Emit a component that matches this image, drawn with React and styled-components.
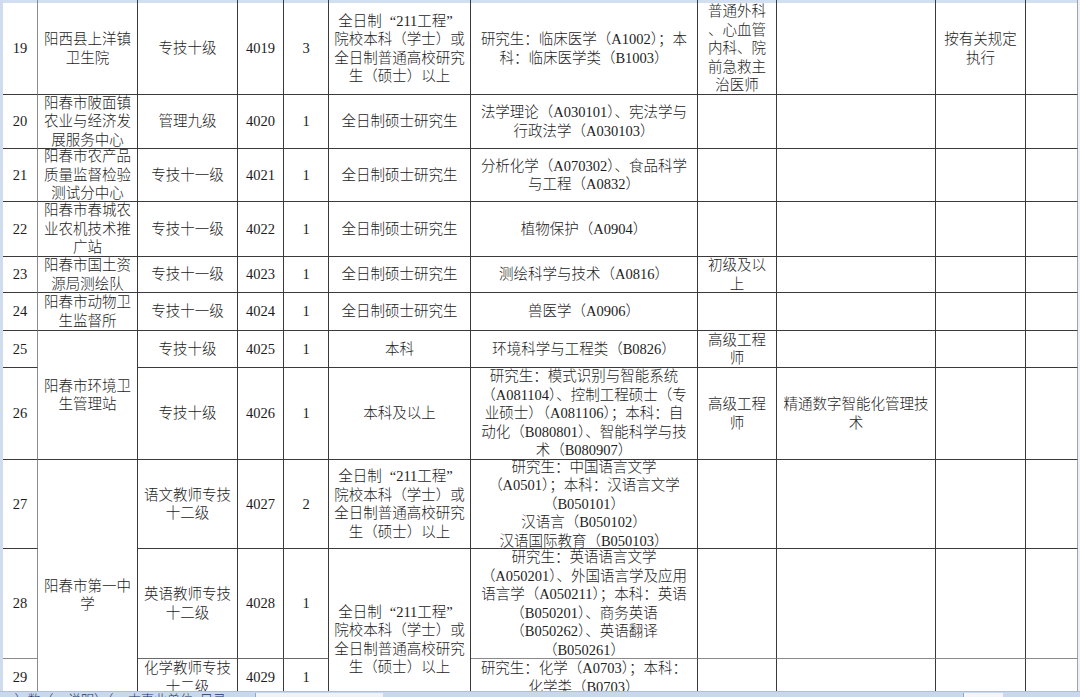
import React from "react";
import styled, { createGlobalStyle } from "styled-components";

const Global = createGlobalStyle`
  html, body { margin: 0; padding: 0; background: #cfdcee; }
  #root { width: 1080px; height: 697px; }
`;

const Sheet = styled.div`
  width: 1080px;
  height: 697px;
  display: flex;
  flex-direction: column;
  overflow: hidden;
  background: #cfdcee;
  font-family: "Liberation Serif", "Noto Sans CJK SC", serif;
  font-size: 14.5px;
  font-weight: 300;
  color: #1c1c1c;
`;

const Viewport = styled.div`
  flex: 1;
  min-height: 0;
  overflow: hidden;
  padding-left: 3px;
`;

const Grid = styled.div`
  display: grid;
  grid-template-columns: 35px 100px 100px 46px 45px 142px 227px 79px 159px 90px 52px 2px;
  grid-template-rows: 3px 92px 54px 53px 55px 36px 38px 37px 92px 89px 110px 38px 34px;
`;

const Cell = styled.div`
  grid-row: ${(p) => p.$r} / span ${(p) => p.$rs || 1};
  grid-column: ${(p) => p.$c} / span 1;
  box-sizing: border-box;
  border-right: 1px solid ${(p) => p.$rc || "#3a3a3a"};
  border-bottom: 1px solid ${(p) => p.$bc || "#3a3a3a"};
  display: flex;
  align-items: center;
  justify-content: center;
  overflow: hidden;
  background: #fff;
  padding: 0 1px;
`;

const Band = styled.div`
  grid-row: 1;
  grid-column: ${(p) => p.$c};
  box-sizing: border-box;
  border-right: 1px solid ${(p) => p.$rc || "#3a3a3a"};
  background: #d2dff0;
`;

const Filler = styled.div`
  grid-row: 1 / span 13;
  grid-column: 12;
  background: #edf1f7;
`;

const Text = styled.span`
  display: block;
  white-space: pre;
  text-align: center;
  line-height: 18.5px;
`;

const Quote = styled.span`
  display: inline-block;
  width: 1em;
  text-align: ${(p) => (p.$open ? "right" : "left")};
`;

const TabBar = styled.div`
  height: 6px;
  flex: none;
  display: flex;
  align-items: flex-start;
  overflow: hidden;
  background: #c9d8ed;
  border-top: 1px solid #aebfdc;
  box-sizing: border-box;
`;

const Tab = styled.div`
  flex: none;
  width: ${(p) => p.$w}px;
  height: 14px;
  padding-left: ${(p) => p.$pad || 4}px;
  box-sizing: border-box;
  overflow: hidden;
  font-size: 13px;
  line-height: 14px;
  margin-top: 1px;
  color: #1d3566;
  white-space: nowrap;
  background: ${(p) => p.$bg || "transparent"};
  border-left: ${(p) => (p.$edge ? "1px solid #8fa6cb" : "none")};
`;

const R = { r19: 2, r20: 3, r21: 4, r22: 5, r23: 6, r24: 7, r25: 8, r26: 9, r27: 10, r28: 11, r29: 12, r30: 13 };

const EDU211 = (
  <>
    全日制<Quote $open>“</Quote>211工程<Quote>”</Quote>
    {"\n院校本科（学士）或\n全日制普通高校研究\n生（硕士）以上"}
  </>
);
const MASTER = "全日制硕士研究生";

const cells = [
  // row 19
  { r: R.r19, c: 1, t: "19" },
  { r: R.r19, c: 2, t: "阳西县上洋镇\n卫生院" },
  { r: R.r19, c: 3, t: "专技十级" },
  { r: R.r19, c: 4, t: "4019" },
  { r: R.r19, c: 5, t: "3" },
  { r: R.r19, c: 6, t: EDU211 },
  { r: R.r19, c: 7, t: "研究生：临床医学（A1002）；本\n科：临床医学类（B1003）" },
  { r: R.r19, c: 8, t: "普通外科\n、心血管\n内科、院\n前急救主\n治医师" },
  { r: R.r19, c: 9, t: "" },
  { r: R.r19, c: 10, t: "按有关规定\n执行" },
  { r: R.r19, c: 11, t: "" },
  // row 20
  { r: R.r20, c: 1, t: "20" },
  { r: R.r20, c: 2, t: "阳春市陂面镇\n农业与经济发\n展服务中心" },
  { r: R.r20, c: 3, t: "管理九级" },
  { r: R.r20, c: 4, t: "4020" },
  { r: R.r20, c: 5, t: "1" },
  { r: R.r20, c: 6, t: MASTER },
  { r: R.r20, c: 7, t: "法学理论（A030101）、宪法学与\n行政法学（A030103）" },
  { r: R.r20, c: 8, t: "" },
  { r: R.r20, c: 9, t: "" },
  { r: R.r20, c: 10, t: "" },
  { r: R.r20, c: 11, t: "" },
  // row 21
  { r: R.r21, c: 1, t: "21" },
  { r: R.r21, c: 2, t: "阳春市农产品\n质量监督检验\n测试分中心" },
  { r: R.r21, c: 3, t: "专技十一级" },
  { r: R.r21, c: 4, t: "4021" },
  { r: R.r21, c: 5, t: "1" },
  { r: R.r21, c: 6, t: MASTER },
  { r: R.r21, c: 7, t: "分析化学（A070302）、食品科学\n与工程（A0832）" },
  { r: R.r21, c: 8, t: "" },
  { r: R.r21, c: 9, t: "" },
  { r: R.r21, c: 10, t: "" },
  { r: R.r21, c: 11, t: "" },
  // row 22
  { r: R.r22, c: 1, t: "22" },
  { r: R.r22, c: 2, t: "阳春市春城农\n业农机技术推\n广站" },
  { r: R.r22, c: 3, t: "专技十一级" },
  { r: R.r22, c: 4, t: "4022" },
  { r: R.r22, c: 5, t: "1" },
  { r: R.r22, c: 6, t: MASTER },
  { r: R.r22, c: 7, t: "植物保护（A0904）" },
  { r: R.r22, c: 8, t: "" },
  { r: R.r22, c: 9, t: "" },
  { r: R.r22, c: 10, t: "" },
  { r: R.r22, c: 11, t: "" },
  // row 23
  { r: R.r23, c: 1, t: "23" },
  { r: R.r23, c: 2, t: "阳春市国土资\n源局测绘队" },
  { r: R.r23, c: 3, t: "专技十一级" },
  { r: R.r23, c: 4, t: "4023" },
  { r: R.r23, c: 5, t: "1" },
  { r: R.r23, c: 6, t: MASTER },
  { r: R.r23, c: 7, t: "测绘科学与技术（A0816）" },
  { r: R.r23, c: 8, t: "初级及以\n上" },
  { r: R.r23, c: 9, t: "" },
  { r: R.r23, c: 10, t: "" },
  { r: R.r23, c: 11, t: "" },
  // row 24
  { r: R.r24, c: 1, t: "24" },
  { r: R.r24, c: 2, t: "阳春市动物卫\n生监督所" },
  { r: R.r24, c: 3, t: "专技十一级" },
  { r: R.r24, c: 4, t: "4024" },
  { r: R.r24, c: 5, t: "1" },
  { r: R.r24, c: 6, t: MASTER },
  { r: R.r24, c: 7, t: "兽医学（A0906）" },
  { r: R.r24, c: 8, t: "" },
  { r: R.r24, c: 9, t: "" },
  { r: R.r24, c: 10, t: "" },
  { r: R.r24, c: 11, t: "" },
  // row 25
  { r: R.r25, c: 1, t: "25" },
  { r: R.r25, c: 2, t: "阳春市环境卫\n生管理站", rs: 2 },
  { r: R.r25, c: 3, t: "专技十级" },
  { r: R.r25, c: 4, t: "4025" },
  { r: R.r25, c: 5, t: "1" },
  { r: R.r25, c: 6, t: "本科" },
  { r: R.r25, c: 7, t: "环境科学与工程类（B0826）" },
  { r: R.r25, c: 8, t: "高级工程\n师" },
  { r: R.r25, c: 9, t: "" },
  { r: R.r25, c: 10, t: "" },
  { r: R.r25, c: 11, t: "" },
  // row 26
  { r: R.r26, c: 1, t: "26" },
  { r: R.r26, c: 3, t: "专技十级" },
  { r: R.r26, c: 4, t: "4026" },
  { r: R.r26, c: 5, t: "1" },
  { r: R.r26, c: 6, t: "本科及以上" },
  {
    r: R.r26,
    c: 7,
    t: "研究生：模式识别与智能系统\n（A081104）、控制工程硕士（专\n业硕士）（A081106）；本科：自\n动化（B080801）、智能科学与技\n术（B080907）",
  },
  { r: R.r26, c: 8, t: "高级工程\n师" },
  { r: R.r26, c: 9, t: "精通数字智能化管理技\n术" },
  { r: R.r26, c: 10, t: "" },
  { r: R.r26, c: 11, t: "" },
  // row 27
  { r: R.r27, c: 1, t: "27" },
  { r: R.r27, c: 2, t: "阳春市第一中\n学", rs: 4 },
  { r: R.r27, c: 3, t: "语文教师专技\n十二级" },
  { r: R.r27, c: 4, t: "4027" },
  { r: R.r27, c: 5, t: "2" },
  { r: R.r27, c: 6, t: EDU211 },
  {
    r: R.r27,
    c: 7,
    t: "研究生：中国语言文学\n（A0501）；本科：汉语言文学\n（B050101）\n汉语言（B050102）\n汉语国际教育（B050103）",
  },
  { r: R.r27, c: 8, t: "" },
  { r: R.r27, c: 9, t: "" },
  { r: R.r27, c: 10, t: "" },
  { r: R.r27, c: 11, t: "" },
  // row 28
  { r: R.r28, c: 1, t: "28", bc: "#8a8a8a" },
  { r: R.r28, c: 3, t: "英语教师专技\n十二级", bc: "#6a6a6a" },
  { r: R.r28, c: 4, t: "4028", bc: "#6a6a6a" },
  { r: R.r28, c: 5, t: "1", bc: "#6a6a6a" },
  { r: R.r28, c: 6, t: EDU211, rs: 3 },
  {
    r: R.r28,
    c: 7,
    t: "研究生：英语语言文学\n（A050201）、外国语言学及应用\n语言学（A050211）；本科：英语\n（B050201）、商务英语\n（B050262）、英语翻译\n（B050261）",
    bc: "#8a8a8a",
  },
  { r: R.r28, c: 8, t: "", bc: "#8a8a8a" },
  { r: R.r28, c: 9, t: "", bc: "#8a8a8a" },
  { r: R.r28, c: 10, t: "", bc: "#8a8a8a" },
  { r: R.r28, c: 11, t: "", bc: "#8a8a8a" },
  // row 29
  { r: R.r29, c: 1, t: "29" },
  { r: R.r29, c: 3, t: "化学教师专技\n十二级" },
  { r: R.r29, c: 4, t: "4029" },
  { r: R.r29, c: 5, t: "1" },
  { r: R.r29, c: 7, t: "研究生：化学（A0703）；本科：\n化学类（B0703）" },
  { r: R.r29, c: 8, t: "" },
  { r: R.r29, c: 9, t: "" },
  { r: R.r29, c: 10, t: "" },
  { r: R.r29, c: 11, t: "" },
  // row 30 (below the fold)
  { r: R.r30, c: 1, t: "30" },
  { r: R.r30, c: 3, t: "物理教师专技\n十二级" },
  { r: R.r30, c: 4, t: "4030" },
  { r: R.r30, c: 5, t: "1" },
  { r: R.r30, c: 7, t: "" },
  { r: R.r30, c: 8, t: "" },
  { r: R.r30, c: 9, t: "" },
  { r: R.r30, c: 10, t: "" },
  { r: R.r30, c: 11, t: "" },
];

const rightColor = (c) => (c === 1 ? "#8c8c8c" : c === 11 ? "#a3a3a3" : undefined);

export default function App() {
  return (
    <>
      <Global />
      <Sheet lang="zh-CN">
        <Viewport>
          <Grid>
            {Array.from({ length: 11 }, (_, i) => (
              <Band key={`b${i}`} $c={i + 1} $rc={rightColor(i + 1)} />
            ))}
            {cells.map((cell, i) => (
              <Cell
                key={i}
                $r={cell.r}
                $c={cell.c}
                $rs={cell.rs}
                $bc={cell.bc}
                $rc={rightColor(cell.c)}
              >
                {cell.t ? <Text>{cell.t}</Text> : null}
              </Cell>
            ))}
            <Filler />
          </Grid>
        </Viewport>
        <TabBar>
          <Tab $w={64} $pad={8}>、）数（</Tab>
          <Tab $w={60} $pad={4}>说明）（</Tab>
          <Tab $w={74} $pad={4}>本事业单位</Tab>
          <Tab $w={57} $pad={2}>目录</Tab>
          <Tab $w={128} $bg="#eef3fa" $edge />
          <Tab $w={580} />
          <Tab $w={40} $bg="#f2f6fb" $edge />
        </TabBar>
      </Sheet>
    </>
  );
}
